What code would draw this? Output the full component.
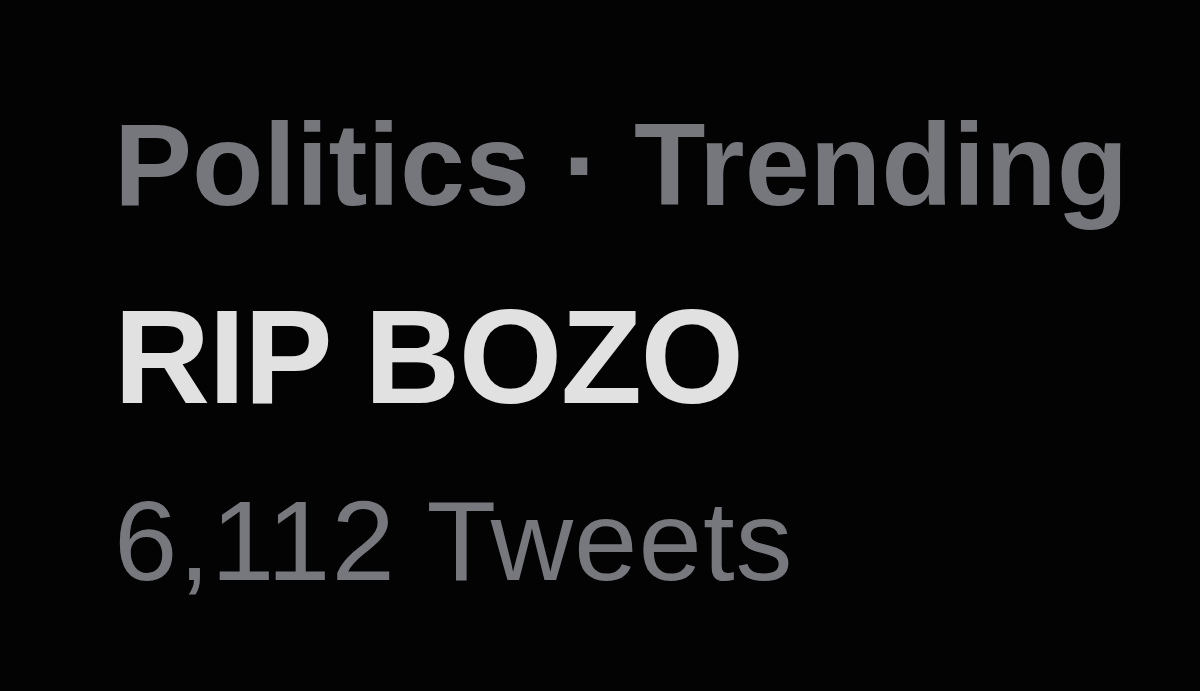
import React from "react";

const App = () => {
  return (
    <div
      className="w-[1200px] h-[691px] bg-[#030303] overflow-hidden pl-[114px] pt-[106px]"
      style={{ fontFamily: '"Liberation Sans", Arial, sans-serif' }}
    >
      {/* Category line */}
      <div className="text-[117px] leading-none font-bold text-[#75777c] whitespace-nowrap">
        Politics · Trending
      </div>

      {/* Trend title */}
      <div className="mt-[68px] text-[133px] leading-none font-bold text-[#e1e1e1] tracking-[-1.5px] whitespace-nowrap">
        RIP BOZO
      </div>

      {/* Tweet count */}
      <div className="mt-[60px] text-[114px] leading-none text-[#76787d] tracking-[1px] whitespace-nowrap">
        6,112 Tweets
      </div>
    </div>
  );
};

export default App;
